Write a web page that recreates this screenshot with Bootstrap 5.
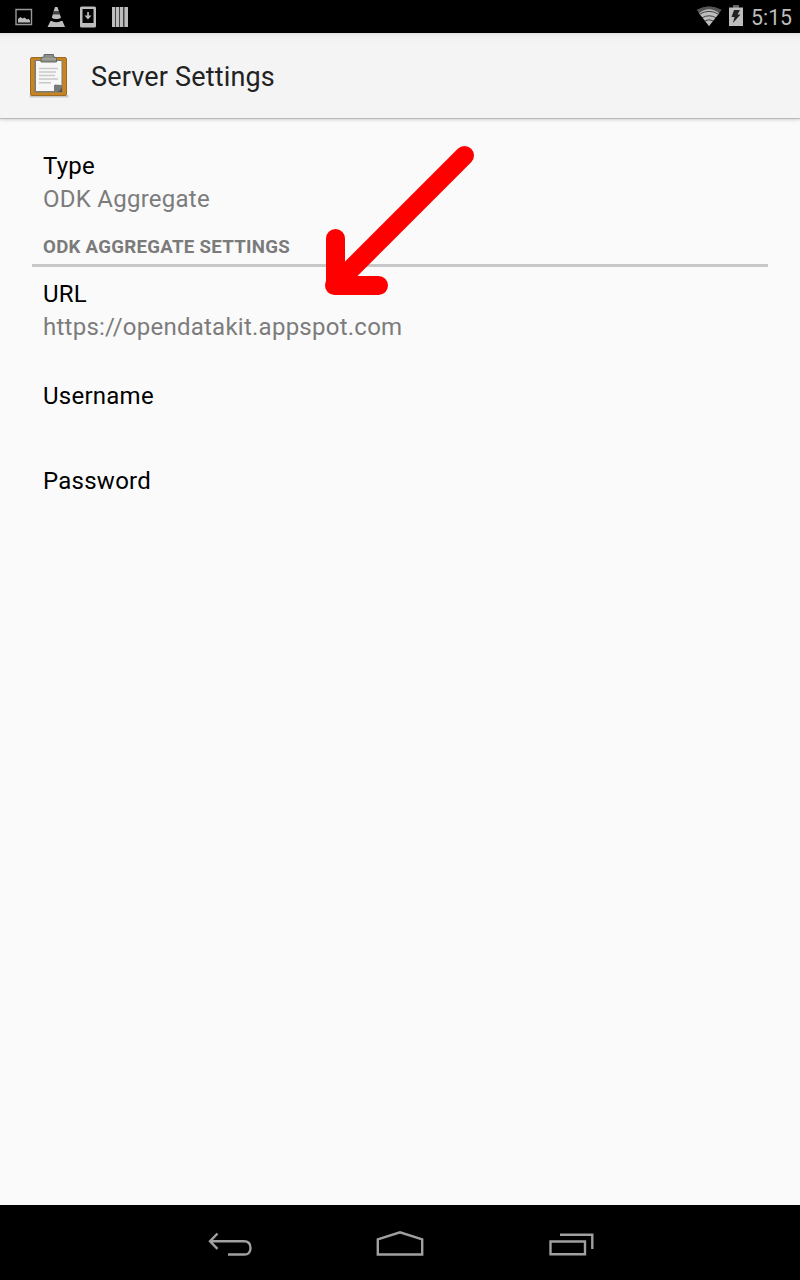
<!DOCTYPE html>
<html lang="en">
<head>
<meta charset="utf-8">
<meta name="viewport" content="width=device-width, initial-scale=1">
<title>Server Settings</title>
<link href="https://cdn.jsdelivr.net/npm/bootstrap@5.3.0/dist/css/bootstrap.min.css" rel="stylesheet">
<style>
body{font-family:Roboto,"Liberation Sans",sans-serif;background:#fafafa;height:1280px;overflow:hidden}
svg{display:block;flex:none}
.status-bar{height:33px;background:#000;color:#bdbdbd;padding:0 8px 0 14px}
.clock{font-size:21.3px;line-height:36px;height:33px;width:41px;white-space:nowrap;margin-left:7px}
.app-bar{height:86px;background:linear-gradient(#e4e4e4,#f1f1f1 4px,#f4f4f4 12px,#f4f4f4);border-bottom:1px solid #b8b8b8;box-shadow:0 1px 3px rgba(0,0,0,.16);padding-left:26px}
.app-title{font-size:27px;line-height:36px;letter-spacing:.17px;color:#222;margin:0 0 0 20px;padding-top:2px;font-weight:400}
.settings{padding:31px 32px 0}
.setting{padding:0 11px;font-size:24px;line-height:33px;letter-spacing:.25px;color:#000}
.setting-value{color:#7c7c7c}
.section-title{font-size:18.7px;font-weight:700;line-height:24px;letter-spacing:.26px;color:#7b7b7b;padding:0 11px 5px;margin:19px 0 11px;border-bottom:3px solid #c8c8c8}
.url{height:102px}.username{height:85px}
.arrow{left:325px;top:145px}
.nav-keys{height:75px;background:#000}
</style>
</head>
<body class="d-flex flex-column position-relative">
<header class="status-bar d-flex align-items-center justify-content-between">
  <svg width="120" height="33" viewBox="14 0 120 33" fill="#bdbdbd">
    <path d="M16 9.500H31.500V24.500H16z" fill="none" stroke="#999" stroke-width="1.400"/>
    <path d="M18 22.500V19l2.500-2 2 1.500 2-1 2.500 2 1.500-.8 1.500 1.800v2z"/>
    <path d="M55 7h2.500l1.500 4.500h-5.500zM53 15h6.700l1 3q-4.300 2-8.700 0zM50.500 21h1.200q4.500 2.500 9.200 0h1.600L65 27H47.500z"/>
    <path d="M53.400 11.500h5.800l1.200 4h-8.200z" fill="#444"/><path d="M52.900 14.500h6.900l1.100 3.200q-4.500 2-9 0z"/>
    <path d="M81.500 6.500h13a1.500 1.500 0 0 1 1.500 1.500v18a1.500 1.500 0 0 1-1.500 1.500h-13A1.500 1.500 0 0 1 80 26V8a1.500 1.500 0 0 1 1.500-1.500z"/>
    <path d="M82.500 9h11v14h-11z" fill="#050505"/><path d="M87.200 12h1.700v3.500h2.600L88 19.500l-3.500-4h2.700z"/>
    <path d="M112 7h3v20h-3zM116 7h3v20h-3zM120 7h3v20h-3zM124.500 7h3.500v20h-3.500z"/><path d="M112 7h16v20h-16z" fill-opacity=".35"/>
  </svg>
  <div class="d-flex">
    <svg width="48" height="33" viewBox="696 0 48 33">
      <path d="M709 26L696.500 9.800Q709 2.500 721.700 9.800z" fill="#555"/>
      <path d="M709 26L699 13.200Q709 5.500 719.200 13.200z" fill="#bdbdbd"/>
      <path d="M699.500 14.200Q709 8.500 718.600 14.200M702 17.800Q709 13.800 716.200 17.800M704.500 21Q709 18.500 713.700 21" stroke="#222" stroke-width=".8" fill="none"/>
      <path d="M733 5.500h6v2h4v18.500h-14V7.500h4z" fill="#bdbdbd"/><path d="M733 5.500h6v2h-6z" fill="#666"/>
      <path d="M734 10h6l-2.500 4.500h3L733 23l1.500-6h-3z" fill="#222"/>
    </svg>
    <div class="clock">5:15</div>
  </div>
</header>
<div class="app-bar d-flex align-items-center">
  <svg width="45" height="48" viewBox="26 52 45 48">
    <rect x="29.500" y="95" width="39" height="2.500" rx="1" fill="#c8c8c8"/>
    <rect x="30.500" y="57.500" width="36" height="38" rx="1.500" fill="#c88420" stroke="#9b6b25"/>
    <path d="M34.500 60h28v32.500h-28z" fill="#777c76"/>
    <path d="M36 61h25.500v30H36z" fill="#f7f7f7"/>
    <path d="M39 68.500h19M39 72h17M39 75.500h16M39 79h19M39 82.700h12" stroke="#c9c9c9" stroke-width="1.500"/>
    <path d="M54 91l1-6.500 6.500.5v6z" fill="#828582"/><path d="M54 85h8v3l-4 4h-4z" fill="#777a78"/><path d="M57.500 92q3-1 4.500-5v5z" fill="#505450"/>
    <path d="M41 62v-4.500l3-.5v-2.500h9.500V57l3 .5V62z" fill="#8b8f85" stroke="#676b65"/>
    <path d="M42 59h14" stroke="#a6a9a0" stroke-width="1.500"/>
  </svg>
  <h1 class="app-title">Server Settings</h1>
</div>
<main class="settings flex-grow-1">
  <div class="setting"><div>Type</div><div class="setting-value">ODK Aggregate</div></div>
  <h2 class="section-title">ODK AGGREGATE SETTINGS</h2>
  <div class="setting url"><div>URL</div><div class="setting-value">https://opendatakit.appspot.com</div></div>
  <div class="setting username">Username</div>
  <div class="setting">Password</div>
</main>
<svg class="arrow position-absolute" width="150" height="151" viewBox="325 145 150 151">
  <path d="M464.500 155.500L334.500 285.500M335.500 238.500V285.500H378.500" fill="none" stroke="red" stroke-width="19" stroke-linecap="round" stroke-linejoin="round"/>
</svg>
<nav class="nav-keys">
  <svg width="800" height="75" viewBox="0 1205 800 75" fill="none" stroke="#a0a0a0" stroke-width="2.400">
    <path d="M210 1241.300H244q6.500 0 6.500 6.700t-6.500 6.500H228M217.500 1233.500l-7.500 7.800 7.500 7.500"/>
    <path d="M377.800 1254.500v-15.200l22.200-7 22.200 7v15.200z"/>
    <path d="M550.500 1241.500h34.500v12.800h-34.500zM560 1234.700h32.300v14.300"/>
  </svg>
</nav>
<script src="https://cdn.jsdelivr.net/npm/bootstrap@5.3.0/dist/js/bootstrap.bundle.min.js"></script>
</body>
</html>
